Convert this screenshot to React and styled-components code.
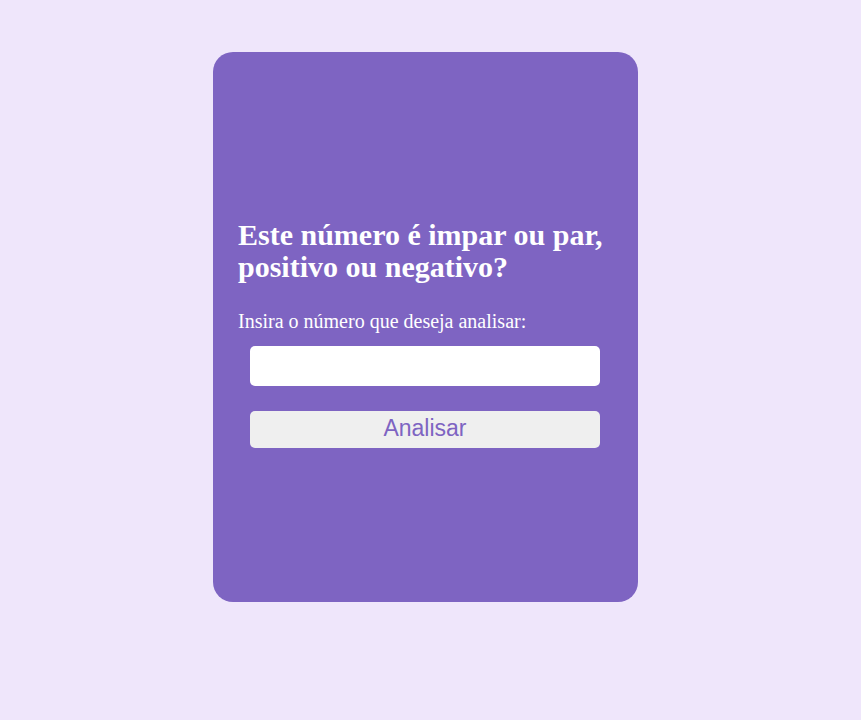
import React from 'react'
import styled, { createGlobalStyle } from 'styled-components'

const GlobalStyle = createGlobalStyle`
  html, body {
    margin: 0;
    background: #efe6fb;
  }
`

const Page = styled.main`
  min-height: 720px;
  padding: 52px 0 0 213px;
  box-sizing: border-box;
`

const Card = styled.section`
  width: 425px;
  height: 550px;
  box-sizing: border-box;
  background: #7e64c2;
  border-radius: 20px;
  padding: 167px 25px 0;
  color: #fff;
  font-family: "Liberation Serif", "Times New Roman", serif;
`

const Title = styled.h1`
  margin: 0 0 27px;
  font-size: 30px;
  line-height: 32px;
  font-weight: bold;
`

const Label = styled.label`
  display: block;
  font-size: 20px;
  line-height: 23px;
  margin-bottom: 13px;
`

const Form = styled.div`
  display: flex;
  flex-direction: column;
  gap: 25px;
  padding: 0 13px 0 12px;
`

const Input = styled.input`
  height: 40px;
  border: none;
  border-radius: 5px;
  background: #fff;
  padding: 0 10px;
  font-size: 18px;
  outline: none;
  box-sizing: border-box;
`

const Button = styled.button`
  height: 37px;
  padding: 0 0 2px;
  border: none;
  border-radius: 5px;
  background: #efefef;
  color: #7e64c2;
  font-family: "Liberation Sans", Arial, sans-serif;
  font-size: 23px;
  cursor: pointer;
`

export default function App() {
  return (
    <>
      <GlobalStyle />
      <Page>
        <Card>
          <Title>Este número é impar ou par, positivo ou negativo?</Title>
          <Label htmlFor="numero">Insira o número que deseja analisar:</Label>
          <Form>
            <Input id="numero" type="number" />
            <Button type="button">Analisar</Button>
          </Form>
        </Card>
      </Page>
    </>
  )
}
